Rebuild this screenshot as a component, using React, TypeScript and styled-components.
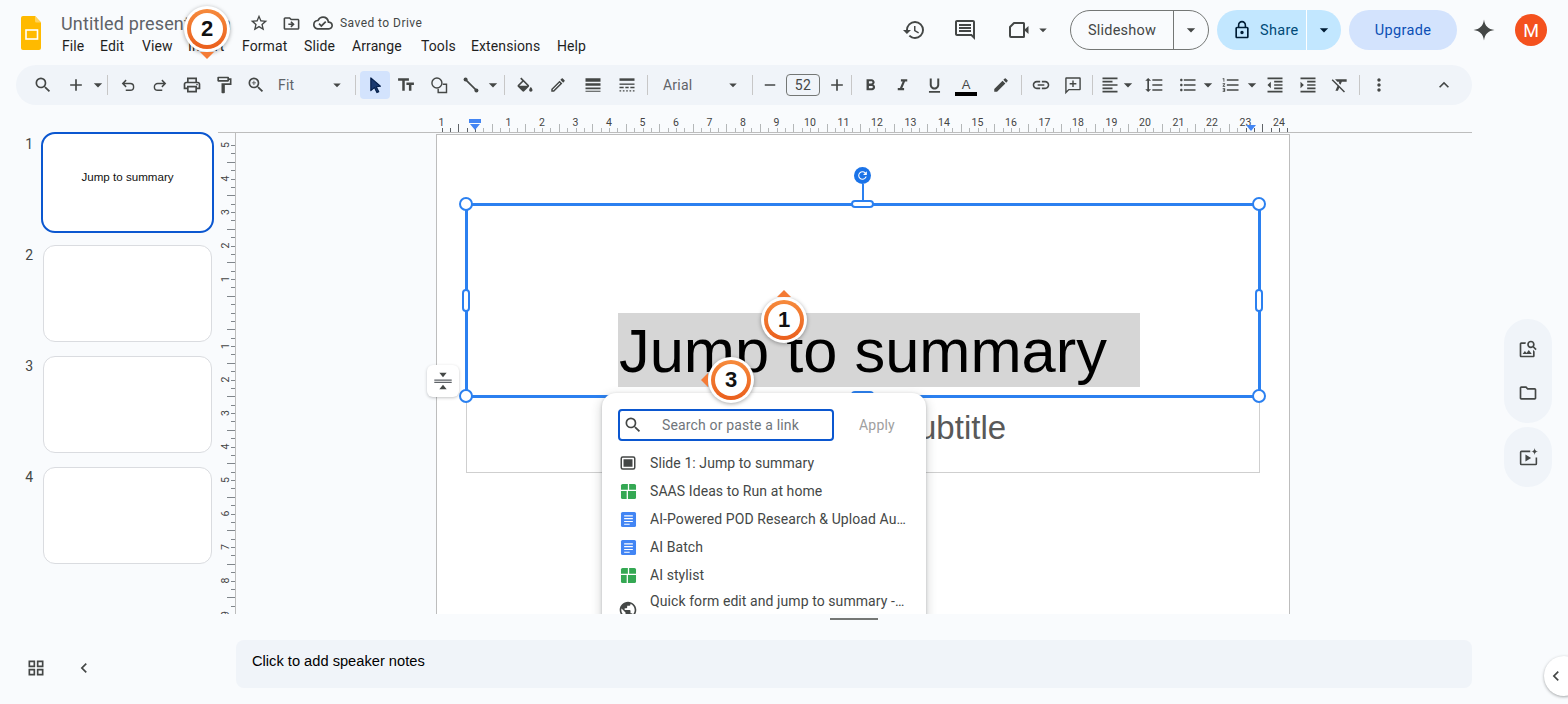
import React from 'react';
import styled, { createGlobalStyle } from 'styled-components';
import {
  MdSearch, MdAdd, MdArrowDropDown, MdOutlinePrint, MdOutlineFormatPaint, MdZoomIn,
  MdTextFields, MdOutlineEdit, MdEdit, MdLineWeight, MdFormatBold, MdFormatItalic,
  MdFormatUnderlined, MdLink, MdFormatAlignLeft, MdFormatLineSpacing, MdFormatListBulleted, MdFormatListNumbered,
  MdFormatIndentDecrease, MdFormatIndentIncrease, MdFormatClear, MdMoreVert, MdExpandLess, MdHistory,
  MdOutlineComment, MdLockOutline, MdStarBorder, MdOutlineDriveFileMove, MdOutlineCloudDone, MdOutlineImageSearch,
  MdOutlineFolder, MdChevronLeft, MdPublic, MdRemove, MdGridView, MdRefresh,
} from 'react-icons/md';

const UI_FONT = `Roboto, "Liberation Sans", sans-serif`;
const ICON = '#444746';
const BLUE = '#2b80f0';

const GlobalStyle = createGlobalStyle`
  html, body { margin: 0; padding: 0; background: #f9fbfd; }
  * { box-sizing: border-box; }
`;

const Page = styled.div`
  position: relative;
  width: 1568px;
  height: 704px;
  overflow: hidden;
  display: flex;
  flex-direction: column;
  background: #f9fbfd;
  font-family: ${UI_FONT};
  color: ${ICON};
`;

/* header */
const Header = styled.header`
  height: 65px;
  flex: none;
  display: flex;
  align-items: flex-start;
`;

const LogoSlot = styled.div`
  width: 61px;
  padding: 16px 0 0 21px;
  flex: none;
`;

const TitleBlock = styled.div`
  display: flex;
  flex-direction: column;
  padding-top: 11px;
`;

const TitleRow = styled.div`
  height: 24px;
  display: flex;
  align-items: center;
`;

const DocTitle = styled.span`
  font-size: 18px;
  color: #5f6368;
  width: 187px;
  letter-spacing: 0.15px;
  white-space: nowrap;
`;

const TitleIcon = styled.span<{ $w: number }>`
  width: ${p => p.$w}px;
  display: flex;
  justify-content: center;
  font-size: 18px;
`;

const SavedText = styled.span`
  font-size: 12px;
  letter-spacing: 0.45px;
  margin-left: 6px;
`;

const MenuRow = styled.nav`
  display: flex;
  height: 22px;
  align-items: center;
  padding-left: 1px;
`;

const MenuItem = styled.span<{ $w: number }>`
  width: ${p => p.$w}px;
  font-size: 14px;
  letter-spacing: 0.1px;
  color: #1f1f1f;
  white-space: nowrap;
`;

const HeaderRight = styled.div`
  margin-left: auto;
  display: flex;
  align-items: center;
  height: 40px;
  margin-top: 10px;
  padding-right: 21px;
`;

const HeadIcon = styled.span<{ $w: number; $ml?: number }>`
  width: ${p => p.$w}px;
  margin-left: ${p => p.$ml ?? 0}px;
  display: flex;
  justify-content: center;
  font-size: 24px;
`;

const Slideshow = styled.div`
  width: 139px;
  height: 40px;
  margin-left: 18px;
  border: 1px solid #747775;
  border-radius: 20px;
  display: flex;
  align-items: center;
  font-size: 14.5px;
  letter-spacing: 0.2px;
`;

const SlideshowLabel = styled.span`
  width: 103px;
  height: 100%;
  display: flex;
  align-items: center;
  justify-content: center;
  border-right: 1px solid #747775;
`;

const CaretSlot = styled.span`
  flex: 1;
  display: flex;
  justify-content: center;
  font-size: 20px;
`;

const ShareButton = styled.div`
  width: 124px;
  height: 40px;
  margin-left: 8px;
  border-radius: 20px;
  background: #c2e7ff;
  display: flex;
  align-items: center;
  font-size: 14.5px;
  letter-spacing: 0.3px;
`;

const ShareLabel = styled.span`
  width: 90px;
  height: 100%;
  display: flex;
  align-items: center;
  gap: 8px;
  padding-left: 15px;
  border-right: 1px solid #fff;
  color: #001d35;
  & > b { font-weight: 400; color: #004a77; }
`;

const UpgradeButton = styled.div`
  width: 108px;
  height: 40px;
  margin-left: 8px;
  border-radius: 20px;
  background: #d3e3fd;
  color: #0b4fb5;
  display: flex;
  align-items: center;
  justify-content: center;
  font-size: 14.5px;
  letter-spacing: 0.35px;
`;

const Sparkle = styled.span`
  width: 58px;
  padding-right: 4px;
  display: flex;
  justify-content: center;
`;

const Avatar = styled.span`
  width: 32px;
  height: 32px;
  border-radius: 50%;
  background: #f4511e;
  color: #fff;
  font-size: 18px;
  display: flex;
  align-items: center;
  justify-content: center;
`;

/* toolbar */
const Toolbar = styled.div`
  height: 40px;
  flex: none;
  margin: 0 96px 0 16px;
  padding-left: 11px;
  border-radius: 20px;
  background: #f0f4f9;
  display: flex;
  align-items: center;
`;

const ToolButton = styled.span<{ $w?: number; $ml?: number; $active?: boolean; $size?: number }>`
  width: ${p => p.$w ?? 32}px;
  margin-left: ${p => p.$ml ?? 0}px;
  height: 28px;
  flex: none;
  display: flex;
  align-items: center;
  justify-content: center;
  border-radius: 4px;
  font-size: ${p => p.$size ?? 20}px;
  color: ${ICON};
  background: ${p => (p.$active ? '#d3e3fd' : 'transparent')};
`;

const ToolCaret = styled.span<{ $ml?: number }>`
  width: 12px;
  margin-left: ${p => p.$ml ?? 0}px;
  flex: none;
  display: flex;
  justify-content: center;
  font-size: 20px;
  & > svg { flex: none; }
`;

const ToolSep = styled.span<{ $l: number; $r: number }>`
  width: 1px;
  height: 20px;
  flex: none;
  margin-left: ${p => p.$l}px;
  margin-right: ${p => p.$r}px;
  background: #c7c7c7;
`;

const ToolSelect = styled.span<{ $w: number; $ml?: number; $pr?: number }>`
  width: ${p => p.$w}px;
  margin-left: ${p => p.$ml ?? 0}px;
  padding: 0 ${p => p.$pr ?? 0}px 0 6px;
  flex: none;
  display: flex;
  align-items: center;
  justify-content: space-between;
  font-size: 14px;
  letter-spacing: 0.2px;
  color: #5f6368;
  & > svg { font-size: 18px; color: ${ICON}; flex: none; }
`;

const FontSizeBox = styled.span`
  width: 34px;
  height: 22px;
  flex: none;
  border: 1px solid #747775;
  border-radius: 4px;
  display: flex;
  align-items: center;
  justify-content: center;
  font-size: 14px;
  letter-spacing: 0.3px;
`;

const ColorButton = styled.span`
  width: 32px;
  height: 28px;
  flex: none;
  display: flex;
  flex-direction: column;
  align-items: center;
  justify-content: flex-end;
  font-family: "Liberation Sans", sans-serif;
  font-size: 13px;
  line-height: 15px;
  padding-bottom: 3px;
  & > i {
    display: block;
    width: 22px;
    height: 4px;
    background: #000;
  }
`;

/* work area */
const Work = styled.main`
  height: 509px;
  flex: none;
  display: flex;
`;

const Filmstrip = styled.aside`
  width: 218px;
  flex: none;
  padding-top: 29px;
  display: flex;
  flex-direction: column;
  gap: 14px;
`;

const FilmRow = styled.div`
  display: flex;
`;

const FilmNumber = styled.span`
  width: 33px;
  margin-right: 10px;
  padding-top: 2px;
  text-align: right;
  font-size: 14px;
  line-height: 16px;
`;

const Thumb = styled.div<{ $active?: boolean }>`
  width: 169px;
  height: 97px;
  background: #fff;
  border-radius: 12px;
  border: 1px solid ${p => (p.$active ? 'transparent' : '#dadce0')};
  outline: ${p => (p.$active ? '2.5px solid #0b57d0' : 'none')};
  outline-offset: ${p => (p.$active ? '0.5px' : '0')};
  display: flex;
  align-items: center;
  justify-content: center;
  font-family: "Liberation Sans", sans-serif;
  font-size: 11.6px;
  color: #111;
  padding-bottom: 12px;
`;

const Editor = styled.section`
  width: 1254px;
  flex: none;
  display: flex;
  flex-direction: column;
`;

const TopRulerBox = styled.div`
  height: 28px;
  flex: none;
  padding-top: 10px;
  border-bottom: 1px solid #bdbdbd;
  & > svg { display: block; }
`;

const EditorBody = styled.div`
  flex: 1;
  min-height: 0;
  display: flex;
`;

const LeftRulerBox = styled.div`
  width: 18px;
  flex: none;
  overflow: hidden;
  & > svg { display: block; }
`;

const Canvas = styled.div`
  flex: 1;
  overflow: hidden;
  padding: 1px 0 0 200px;
  border-left: 1px solid #bdbdbd;
  margin-left: -1px;
`;

const Slide = styled.div`
  position: relative;
  width: 854px;
  height: 500px;
  background: #fff;
  border: 1px solid #bdbdbd;
`;

const SelectionBox = styled.div`
  position: absolute;
  left: 28px;
  top: 68px;
  width: 795.5px;
  height: 194.5px;
  border: 3px solid ${BLUE};
`;

const HighlightTitle = styled.div`
  position: absolute;
  left: 181px;
  top: 178px;
  width: 522px;
  height: 74px;
  background: #d6d6d6;
  padding-left: 1px;
  font-family: "Liberation Sans", sans-serif;
  font-size: 61.4px;
  line-height: 76px;
  color: #000;
  white-space: nowrap;
`;

const SubtitleBox = styled.div`
  position: absolute;
  left: 29px;
  top: 261px;
  width: 794px;
  height: 77px;
  border: 1px solid #cfcfcf;
  display: flex;
  align-items: center;
  justify-content: center;
  font-family: "Liberation Sans", sans-serif;
  font-size: 33px;
  color: #595959;
  padding-bottom: 14px;
`;

const CornerHandle = styled.span<{ $x: number; $y: number }>`
  position: absolute;
  left: ${p => p.$x}px;
  top: ${p => p.$y}px;
  width: 14px;
  height: 14px;
  border-radius: 50%;
  background: #fff;
  border: 2px solid ${BLUE};
`;

const PillHandle = styled.span<{ $x: number; $y: number; $wide?: boolean }>`
  position: absolute;
  left: ${p => p.$x}px;
  top: ${p => p.$y}px;
  width: ${p => (p.$wide ? 23 : 8)}px;
  height: ${p => (p.$wide ? 8 : 23)}px;
  border-radius: 4px;
  background: #fff;
  border: 2px solid ${BLUE};
`;

const RotateStem = styled.span`
  position: absolute;
  left: 425px;
  top: 49px;
  width: 2px;
  height: 18px;
  background: ${BLUE};
`;

const RotateHandle = styled.span`
  position: absolute;
  left: 417px;
  top: 32px;
  width: 17px;
  height: 17px;
  border-radius: 50%;
  background: #1a73e8;
  color: #fff;
  display: flex;
  align-items: center;
  justify-content: center;
  font-size: 13px;
`;

const BottomPill = styled.span`
  position: absolute;
  left: 414px;
  top: 256px;
  width: 23px;
  height: 8px;
  border-radius: 4px 4px 0 0;
  background: ${BLUE};
`;

const SpacingButton = styled.div`
  position: absolute;
  left: -10px;
  top: 230px;
  width: 32px;
  height: 32px;
  border-radius: 6px;
  background: #fff;
  box-shadow: 0 1px 3px rgba(60, 64, 67, 0.3);
  display: flex;
  align-items: center;
  justify-content: center;
`;

/* link popover */
const LinkPopover = styled.div`
  position: absolute;
  left: 165px;
  top: 258px;
  width: 324px;
  height: 300px;
  padding: 16px 0 0 16px;
  background: #fff;
  border-radius: 14px;
  box-shadow: 0 1px 3px rgba(60, 64, 67, 0.3), 0 4px 8px 3px rgba(60, 64, 67, 0.15);
`;

const SearchRow = styled.div`
  display: flex;
  align-items: center;
  margin-bottom: 8px;
`;

const SearchField = styled.div`
  width: 216px;
  height: 32px;
  border: 2px solid #0b57d0;
  border-radius: 4px;
  display: flex;
  align-items: center;
  padding-left: 3px;
  font-size: 14px;
  letter-spacing: 0.15px;
  color: #70757a;
  & > svg { font-size: 20px; color: ${ICON}; margin-right: 19px; flex: none; }
`;

const ApplyLabel = styled.span`
  margin-left: 25px;
  font-size: 14px;
  letter-spacing: 0.2px;
  color: #a0a0a0;
`;

const LinkRow = styled.div<{ $tall?: boolean }>`
  height: ${p => (p.$tall ? 44 : 28)}px;
  display: flex;
  align-items: ${p => (p.$tall ? 'flex-start' : 'center')};
  padding-top: ${p => (p.$tall ? '4px' : '0')};
`;

const LinkIcon = styled.span<{ $drop?: number }>`
  width: 20px;
  height: 20px;
  flex: none;
  margin-top: ${p => p.$drop ?? 0}px;
  margin-right: 12px;
  display: flex;
  align-items: center;
  justify-content: center;
  font-size: 20px;
`;

const LinkText = styled.span`
  width: 256px;
  font-size: 14px;
  line-height: 16px;
  letter-spacing: 0.08px;
  white-space: nowrap;
  overflow: hidden;
  text-overflow: ellipsis;
  color: #444746;
`;

/* right rail */
const Rail = styled.aside`
  width: 96px;
  flex: none;
  padding: 214px 0 0 32px;
  display: flex;
  flex-direction: column;
  gap: 4px;
`;

const RailPill = styled.div<{ $h: number }>`
  width: 48px;
  height: ${p => p.$h}px;
  border-radius: 24px;
  background: #f0f4f9;
  display: flex;
  flex-direction: column;
  align-items: center;
  justify-content: center;
  gap: 24px;
  font-size: 20px;
`;

/* footer */
const Footer = styled.footer`
  flex: 1;
  display: flex;
`;

const FooterTools = styled.div`
  width: 236px;
  flex: none;
  padding: 44px 0 0 26px;
  display: flex;
  align-items: flex-start;
`;

const FooterIcon = styled.span<{ $w: number }>`
  width: ${p => p.$w}px;
  height: 20px;
  display: flex;
  align-items: center;
  justify-content: center;
  font-size: 20px;
`;

const NotesColumn = styled.div`
  width: 1236px;
  flex: none;
  display: flex;
  flex-direction: column;
  align-items: center;
`;

const DragBar = styled.span`
  width: 48px;
  height: 2px;
  margin: 4px 0 20px;
  background: #747775;
`;

const Notes = styled.div`
  width: 100%;
  height: 48px;
  border-radius: 8px;
  background: #f0f4f9;
  padding: 13px 16px;
  font-family: "Liberation Sans", sans-serif;
  font-size: 14.67px;
  line-height: 16px;
  color: #000;
`;

const CornerButton = styled.span`
  position: absolute;
  left: 1544px;
  top: 656px;
  width: 40px;
  height: 40px;
  border-radius: 50%;
  background: #fff;
  box-shadow: 0 1px 3px rgba(60, 64, 67, 0.45);
  padding-left: 2px;
  display: flex;
  align-items: center;
  font-size: 20px;
`;

/* numbered callouts */
const Callout = styled.div<{ $x: number; $y: number; $tip: 'top' | 'bottom' | 'left' }>`
  position: absolute;
  left: ${p => p.$x - 23}px;
  top: ${p => p.$y - 23}px;
  width: 46px;
  height: 46px;
  border-radius: 50%;
  background: #fff;
  box-shadow: 0 1px 4px rgba(0, 0, 0, 0.35);
  display: flex;
  align-items: center;
  justify-content: center;
  &::after {
    content: '';
    position: absolute;
    width: 0;
    height: 0;
    border: 7px solid transparent;
    ${p => p.$tip === 'top' && 'left: 16px; top: -7px; border-bottom-color: #f47b36; border-top-width: 0;'}
    ${p => p.$tip === 'bottom' && 'left: 16px; bottom: -7px; border-top-color: #f47b36; border-bottom-width: 0;'}
    ${p => p.$tip === 'left' && 'left: -7px; top: 16px; border-right-color: #f47b36; border-left-width: 0;'}
  }
`;

const CalloutRing = styled.span`
  width: 40px;
  height: 40px;
  border-radius: 50%;
  background: linear-gradient(180deg, #f68a3c, #ea5f1d);
  display: flex;
  align-items: center;
  justify-content: center;
`;

const CalloutFace = styled.span`
  width: 32px;
  height: 32px;
  border-radius: 50%;
  background: #fff;
  display: flex;
  align-items: center;
  justify-content: center;
  font-family: "Liberation Sans", sans-serif;
  font-size: 22px;
  font-weight: 700;
  color: #111;
`;

/* drawn icons */
const Svg: React.FC<{ s?: number; children: React.ReactNode }> = ({ s = 20, children }) => (
  <svg width={s} height={s} viewBox="0 0 24 24" fill="none">{children}</svg>
);

const SlidesLogo = () => (
  <svg width="20" height="34" viewBox="0 0 20 34">
    <path d="M2 0h12l6 6.5V32a2 2 0 0 1-2 2H2a2 2 0 0 1-2-2V2a2 2 0 0 1 2-2z" fill="#ffba00" />
    <path d="M14 0l6 6.5h-4.5A1.5 1.5 0 0 1 14 5z" fill="#ffd35c" />
    <rect x="5" y="14" width="11.5" height="9" fill="none" stroke="#fff" strokeWidth="1.6" />
  </svg>
);

const UndoIcon = () => (
  <Svg s={18}>
    <path d="M9.5 5.5L5 10l4.5 4.5M5 10h10a4.5 4.5 0 0 1 0 9H9" stroke={ICON} strokeWidth="1.9" />
  </Svg>
);

const RedoIcon = () => (
  <Svg s={18}>
    <path d="M14.5 5.5L19 10l-4.5 4.5M19 10H9a4.5 4.5 0 0 0 0 9h6" stroke={ICON} strokeWidth="1.9" />
  </Svg>
);

const ArrowIcon = () => (
  <Svg>
    <path d="M7 3.5l11.5 10-5 .6 3 5.9-2.2 1.1-3-6-4.3 3.6z" fill="#1b3a70" stroke="#041e49" strokeWidth="1.4" strokeLinejoin="round" />
  </Svg>
);

const ShapeIcon = () => (
  <Svg>
    <circle cx="9.5" cy="9.5" r="6" stroke={ICON} strokeWidth="1.7" />
    <path d="M16.5 11H21v10H11v-4.5" stroke={ICON} strokeWidth="1.7" />
  </Svg>
);

const LineIcon = () => (
  <Svg>
    <path d="M5.5 5.5l13 13" stroke={ICON} strokeWidth="2" />
    <circle cx="5.5" cy="5.5" r="2.4" fill={ICON} />
    <circle cx="18.5" cy="18.5" r="2.4" fill={ICON} />
  </Svg>
);

const BucketIcon = () => (
  <Svg>
    <path transform="translate(0 3)" fill={ICON} d="M16.56 8.94L7.62 0 6.21 1.41l2.38 2.38-5.15 5.15c-.59.59-.59 1.54 0 2.12l5.5 5.5c.29.29.68.44 1.06.44s.77-.15 1.06-.44l5.5-5.5c.59-.58.59-1.53 0-2.12zM5.21 10L10 5.21 14.79 10H5.21zM19 11.5s-2 2.17-2 3.5c0 1.1.9 2 2 2s2-.9 2-2c0-1.33-2-3.5-2-3.5z" />
  </Svg>
);

const DashIcon = () => (
  <Svg>
    <path d="M3 5.5h18" stroke={ICON} strokeWidth="3" />
    <path d="M3 11h18" stroke={ICON} strokeWidth="1.6" />
    <path d="M3 15h5M10 15h4M16 15h5" stroke={ICON} strokeWidth="1.6" />
    <path d="M3 19h2M7 19h2M11 19h2M15 19h2M19 19h2" stroke={ICON} strokeWidth="1.6" />
  </Svg>
);

const AddCommentIcon = () => (
  <Svg>
    <path d="M4 3.5h16a.5.5 0 0 1 .5.5v13a.5.5 0 0 1-.5.5H7L3.5 21V4a.5.5 0 0 1 .5-.5z" stroke={ICON} strokeWidth="1.7" />
    <path d="M12 6.5v8M8 10.5h8" stroke={ICON} strokeWidth="1.7" />
  </Svg>
);

const VideoIcon = () => (
  <Svg s={24}>
    <path d="M3 9l4-4h9.5a.5.5 0 0 1 .5.5v13a.5.5 0 0 1-.5.5H4a1 1 0 0 1-1-1z" stroke={ICON} strokeWidth="2" strokeLinejoin="round" />
    <path d="M17 12l4.5-4v8z" fill={ICON} />
  </Svg>
);

const SparkleIcon = () => (
  <Svg s={24}>
    <path d="M12 1.5C12.8 7.8 16.2 11.2 22.5 12 16.2 12.8 12.8 16.2 12 22.5 11.2 16.2 7.8 12.8 1.5 12 7.8 11.2 11.2 7.8 12 1.5z" fill={ICON} />
  </Svg>
);

const SpacingIcon = () => (
  <Svg s={22}>
    <path d="M2.5 11h19M2.5 13.5h19" stroke="#5f6368" strokeWidth="1.5" />
    <path d="M8 3h8l-4 5zM12 16l4 5H8z" fill="#444746" />
  </Svg>
);

const SlideLinkIcon = () => (
  <Svg s={18}>
    <rect x="3" y="4" width="18" height="16" rx="2" stroke={ICON} strokeWidth="2" />
    <rect x="6" y="7" width="12" height="10" fill={ICON} />
  </Svg>
);

const SheetIcon = () => (
  <Svg s={19}>
    <rect x="2.5" y="2.5" width="19" height="19" rx="2" fill="#34a853" />
    <path d="M2.5 10.5h19M10.5 10.5v11M12 2.5v8" stroke="#fff" strokeWidth="1.6" />
  </Svg>
);

const DocIcon = () => (
  <Svg s={19}>
    <rect x="2.5" y="2.5" width="19" height="19" rx="2" fill="#4285f4" />
    <path d="M6.5 7.5h11M6.5 11h11M6.5 14.5h11M6.5 18h7" stroke="#fff" strokeWidth="1.5" />
  </Svg>
);

const VideoSparkIcon = () => (
  <Svg s={21}>
    <path d="M14 5H4a1 1 0 0 0-1 1v13a1 1 0 0 0 1 1h16a1 1 0 0 0 1-1v-7" stroke={ICON} strokeWidth="1.8" />
    <path d="M8.5 8.5l6.5 4-6.5 4z" fill={ICON} />
    <path d="M19 1c.3 2.4 1.4 3.7 4 4-2.6.3-3.7 1.6-4 4-.3-2.4-1.4-3.7-4-4 2.6-.3 3.7-1.6 4-4z" fill={ICON} />
  </Svg>
);

/* rulers */
const PITCH = 33.5;

const TopRuler = () => {
  const zero = 257;
  const ticks: number[] = [];
  for (let v = -1; v <= 24.25; v += 0.25) ticks.push(v);
  return (
    <svg width="1254" height="17" viewBox="0 0 1254 17">
      {ticks.map(v => {
        const x = Math.round(zero + v * PITCH);
        const long = Number.isInteger(v * 2) && !Number.isInteger(v);
        const inside = v > 0 && v < 23;
        return <rect key={v} x={x} y={long ? 9 : 13} width="1" height={long ? 8 : 4} fill={inside ? '#b4b7b8' : '#5f6368'} />;
      })}
      {Array.from({ length: 26 }, (_, i) => i - 1).filter(v => v !== 0).map(v => (
        <text key={v} x={zero + v * PITCH} y="11" fontSize="10.5" textAnchor="middle" fill="#444" fontFamily="Roboto, sans-serif">{Math.abs(v)}</text>
      ))}
      <path d="M251 4h12v4h-12zM252 9h10l-5 6z" fill="#4285f4" />
      <path d="M1028 10h10l-5 6z" fill="#4285f4" />
    </svg>
  );
};

const LeftRuler = () => {
  const zero = 179.5;
  const labels = [5, 4, 3, 2, 1, -1, -2, -3, -4, -5, -6, -7, -8, -9];
  const ticks: number[] = [];
  for (let v = -5; v <= 9.5; v += 0.25) ticks.push(v);
  return (
    <svg width="18" height="482" viewBox="0 0 18 482">
      {ticks.map(v => {
        const y = Math.round(zero + v * PITCH);
        const long = Number.isInteger(v * 2) && !Number.isInteger(v);
        return <rect key={v} x={long ? 9 : 13} y={y} width={long ? 9 : 5} height="1" fill="#80868b" />;
      })}
      {labels.map(v => {
        const y = zero - v * PITCH;
        return <text key={v} transform={`translate(11 ${y}) rotate(-90)`} fontSize="10.5" textAnchor="middle" fill="#444" fontFamily="Roboto, sans-serif">{Math.abs(v)}</text>;
      })}
    </svg>
  );
};

const menus: [string, number][] = [
  ['File', 38], ['Edit', 42], ['View', 46], ['Insert', 54], ['Format', 62], ['Slide', 48],
  ['Arrange', 69], ['Tools', 50], ['Extensions', 86], ['Help', 40],
];

const links = [
  { id: 'saas', icon: <SheetIcon />, text: 'SAAS Ideas to Run at home' },
  { id: 'pod', icon: <DocIcon />, text: 'AI-Powered POD Research & Upload Automation' },
  { id: 'batch', icon: <DocIcon />, text: 'AI Batch' },
  { id: 'stylist', icon: <SheetIcon />, text: 'AI stylist' },
];

const Badge: React.FC<{ n: number; x: number; y: number; tip: 'top' | 'bottom' | 'left' }> = ({ n, x, y, tip }) => (
  <Callout $x={x} $y={y} $tip={tip}>
    <CalloutRing>
      <CalloutFace>{n}</CalloutFace>
    </CalloutRing>
  </Callout>
);

const App: React.FC = () => {
  return (
    <Page>
      <GlobalStyle />
      <Header>
        <LogoSlot><SlidesLogo /></LogoSlot>
        <TitleBlock>
          <TitleRow>
            <DocTitle>Untitled presentation</DocTitle>
            <TitleIcon $w={22}><MdStarBorder size={20} /></TitleIcon>
            <TitleIcon $w={42}><MdOutlineDriveFileMove size={19} /></TitleIcon>
            <TitleIcon $w={22}><MdOutlineCloudDone size={20} /></TitleIcon>
            <SavedText>Saved to Drive</SavedText>
          </TitleRow>
          <MenuRow>
            {menus.map(([label, w]) => <MenuItem key={label} $w={w}>{label}</MenuItem>)}
          </MenuRow>
        </TitleBlock>
        <HeaderRight>
          <HeadIcon $w={42}><MdHistory /></HeadIcon>
          <HeadIcon $w={60}><MdOutlineComment /></HeadIcon>
          <HeadIcon $w={48}><VideoIcon /></HeadIcon>
          <HeadIcon $w={18} $ml={-9}><MdArrowDropDown size={20} /></HeadIcon>
          <Slideshow>
            <SlideshowLabel>Slideshow</SlideshowLabel>
            <CaretSlot><MdArrowDropDown /></CaretSlot>
          </Slideshow>
          <ShareButton>
            <ShareLabel><MdLockOutline size={20} /><b>Share</b></ShareLabel>
            <CaretSlot><MdArrowDropDown color="#001d35" /></CaretSlot>
          </ShareButton>
          <UpgradeButton>Upgrade</UpgradeButton>
          <Sparkle><SparkleIcon /></Sparkle>
          <Avatar>M</Avatar>
        </HeaderRight>
      </Header>

      <Toolbar>
        <ToolButton><MdSearch /></ToolButton>
        <ToolButton $w={33}><MdAdd /></ToolButton>
        <ToolCaret><MdArrowDropDown /></ToolCaret>
        <ToolSep $l={3} $r={4} />
        <ToolButton><UndoIcon /></ToolButton>
        <ToolButton><RedoIcon /></ToolButton>
        <ToolButton><MdOutlinePrint /></ToolButton>
        <ToolButton><MdOutlineFormatPaint /></ToolButton>
        <ToolButton><MdZoomIn /></ToolButton>
        <ToolSelect $w={74}>Fit<MdArrowDropDown /></ToolSelect>
        <ToolSep $l={9} $r={4} />
        <ToolButton $w={30} $active><ArrowIcon /></ToolButton>
        <ToolButton><MdTextFields /></ToolButton>
        <ToolButton $w={33}><ShapeIcon /></ToolButton>
        <ToolButton><LineIcon /></ToolButton>
        <ToolCaret><MdArrowDropDown /></ToolCaret>
        <ToolSep $l={5} $r={4} />
        <ToolButton><BucketIcon /></ToolButton>
        <ToolButton $w={33} $size={18}><MdOutlineEdit /></ToolButton>
        <ToolButton $w={37}><MdLineWeight /></ToolButton>
        <ToolButton><DashIcon /></ToolButton>
        <ToolSep $l={4} $r={0} />
        <ToolSelect $w={88} $ml={9} $pr={3}>Arial<MdArrowDropDown /></ToolSelect>
        <ToolSep $l={7} $r={1} />
        <ToolButton $size={18}><MdRemove /></ToolButton>
        <FontSizeBox>52</FontSizeBox>
        <ToolButton $w={33}><MdAdd /></ToolButton>
        <ToolSep $l={-2} $r={2} />
        <ToolButton $size={19}><MdFormatBold /></ToolButton>
        <ToolButton $size={19}><MdFormatItalic /></ToolButton>
        <ToolButton $size={19}><MdFormatUnderlined /></ToolButton>
        <ColorButton>A<i /></ColorButton>
        <ToolButton $w={38} $size={18}><MdEdit /></ToolButton>
        <ToolSep $l={1} $r={3} />
        <ToolButton><MdLink /></ToolButton>
        <ToolButton><AddCommentIcon /></ToolButton>
        <ToolSep $l={3} $r={1} />
        <ToolButton><MdFormatAlignLeft /></ToolButton>
        <ToolCaret $ml={-4}><MdArrowDropDown /></ToolCaret>
        <ToolButton $w={40}><MdFormatLineSpacing /></ToolButton>
        <ToolButton $w={28}><MdFormatListBulleted /></ToolButton>
        <ToolCaret><MdArrowDropDown /></ToolCaret>
        <ToolButton $w={34}><MdFormatListNumbered /></ToolButton>
        <ToolCaret $ml={-2}><MdArrowDropDown /></ToolCaret>
        <ToolButton $w={34}><MdFormatIndentDecrease /></ToolButton>
        <ToolButton><MdFormatIndentIncrease /></ToolButton>
        <ToolButton><MdFormatClear /></ToolButton>
        <ToolSep $l={3} $r={3} />
        <ToolButton><MdMoreVert /></ToolButton>
        <ToolButton $ml={33}><MdExpandLess /></ToolButton>
      </Toolbar>

      <Work>
        <Filmstrip>
          <FilmRow><FilmNumber>1</FilmNumber><Thumb $active>Jump to summary</Thumb></FilmRow>
          <FilmRow><FilmNumber>2</FilmNumber><Thumb /></FilmRow>
          <FilmRow><FilmNumber>3</FilmNumber><Thumb /></FilmRow>
          <FilmRow><FilmNumber>4</FilmNumber><Thumb /></FilmRow>
        </Filmstrip>
        <Editor>
          <TopRulerBox><TopRuler /></TopRulerBox>
          <EditorBody>
            <LeftRulerBox><LeftRuler /></LeftRulerBox>
            <Canvas>
              <Slide>
                <SubtitleBox>Click to add subtitle</SubtitleBox>
                <HighlightTitle>Jump to summary</HighlightTitle>
                <SelectionBox />
                <RotateStem />
                <RotateHandle><MdRefresh /></RotateHandle>
                <CornerHandle $x={22} $y={62} />
                <CornerHandle $x={815} $y={62} />
                <CornerHandle $x={22} $y={254} />
                <CornerHandle $x={815} $y={254} />
                <PillHandle $x={414} $y={65} $wide />
                <PillHandle $x={25} $y={154} />
                <PillHandle $x={818} $y={154} />
                <BottomPill />
                <SpacingButton><SpacingIcon /></SpacingButton>
                <LinkPopover>
                  <SearchRow>
                    <SearchField><MdSearch />Search or paste a link</SearchField>
                    <ApplyLabel>Apply</ApplyLabel>
                  </SearchRow>
                  <LinkRow>
                    <LinkIcon><SlideLinkIcon /></LinkIcon>
                    <LinkText>Slide 1: Jump to summary</LinkText>
                  </LinkRow>
                  {links.map(l => (
                    <LinkRow key={l.id}>
                      <LinkIcon>{l.icon}</LinkIcon>
                      <LinkText>{l.text}</LinkText>
                    </LinkRow>
                  ))}
                  <LinkRow $tall>
                    <LinkIcon $drop={7}><MdPublic /></LinkIcon>
                    <LinkText>Quick form edit and jump to summary - Google Forms</LinkText>
                  </LinkRow>
                </LinkPopover>
              </Slide>
            </Canvas>
          </EditorBody>
        </Editor>
        <Rail>
          <RailPill $h={104}><MdOutlineImageSearch /><MdOutlineFolder /></RailPill>
          <RailPill $h={60}><VideoSparkIcon /></RailPill>
        </Rail>
      </Work>

      <Footer>
        <FooterTools>
          <FooterIcon $w={20}><MdGridView /></FooterIcon>
          <FooterIcon $w={76}><MdChevronLeft /></FooterIcon>
        </FooterTools>
        <NotesColumn>
          <DragBar />
          <Notes>Click to add speaker notes</Notes>
        </NotesColumn>
      </Footer>
      <CornerButton><MdChevronLeft /></CornerButton>

      <Badge n={1} x={784} y={320} tip="top" />
      <Badge n={2} x={207} y={29} tip="bottom" />
      <Badge n={3} x={731} y={380} tip="left" />
    </Page>
  );
};

export default App;
